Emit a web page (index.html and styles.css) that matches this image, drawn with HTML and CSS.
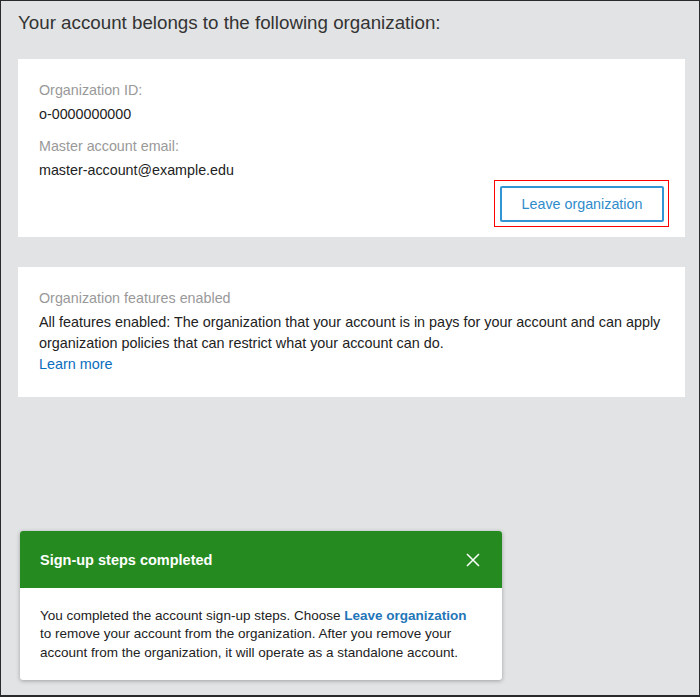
FILE: index.html
```html
<!DOCTYPE html>
<html>
<head>
<meta charset="utf-8">
<link rel="stylesheet" href="styles.css">
</head>
<body>
<div class="frame">
  <h1 class="title">Your account belongs to the following organization:</h1>
  <section class="card card-org">
    <div class="field">
      <div class="label">Organization ID:</div>
      <div class="value">o-0000000000</div>
    </div>
    <div class="field">
      <div class="label">Master account email:</div>
      <div class="value">master-account@example.edu</div>
    </div>
    <div class="actions">
      <span class="highlight"><button class="btn">Leave organization</button></span>
    </div>
  </section>
  <section class="card card-features">
    <div class="label">Organization features enabled</div>
    <p class="desc">All features enabled: The organization that your account is in pays for your account and can apply organization policies that can restrict what your account can do.</p>
    <a class="link" href="#">Learn more</a>
  </section>
  <div class="toast">
    <div class="toast-head">
      <span class="toast-title">Sign-up steps completed</span>
      <svg class="toast-close" width="14" height="14" viewBox="0 0 14 14"><path d="M1 1L13 13M13 1L1 13" stroke="#fff" stroke-width="1.5" fill="none"/></svg>
    </div>
    <div class="toast-body">You completed the account sign-up steps. Choose <b class="toast-link">Leave organization</b> to remove your account from the organization. After you remove your account from the organization, it will operate as a standalone account.</div>
  </div>
</div>
</body>
</html>
```

FILE: styles.css
```css
html, body {
  margin: 0;
  padding: 0;
}
body {
  font-family: "Liberation Sans", Arial, sans-serif;
  color: #333;
  background: #e2e3e5;
}
.frame {
  position: relative;
  box-sizing: border-box;
  width: 700px;
  height: 697px;
  border: 1px solid #2a2a2a;
  border-bottom-width: 2px;
  background: #e2e3e5;
  padding: 0 14px 0 17px;
}
.title {
  margin: 0;
  padding-top: 10px;
  font-size: 18.75px;
  font-weight: normal;
  line-height: 24px;
  color: #333;
  height: 48px;
}
.card {
  background: #fff;
}
.card-org {
  padding: 21px 16px 10px 21px;
  height: 178px;
  box-sizing: border-box;
}
.label {
  font-size: 14.3px;
  line-height: 20px;
  color: #999;
}
.value {
  font-size: 14.3px;
  line-height: 20px;
  color: #222;
  margin-top: 4px;
}
.field + .field {
  margin-top: 12px;
}
.actions {
  display: flex;
  justify-content: flex-end;
}
.highlight {
  display: block;
  border: 1px solid #ff0000;
  padding: 5px 4px 4px 5px;
}
.btn {
  display: block;
  box-sizing: border-box;
  width: 164px;
  height: 36px;
  background: #fff;
  border: 2px solid #3595d4;
  border-radius: 2px;
  color: #2f8ccb;
  font-family: "Liberation Sans", Arial, sans-serif;
  font-size: 14.3px;
  padding: 0;
}
.card-features {
  margin-top: 30px;
  padding: 21px 20px 21px 21px;
  height: 130px;
  box-sizing: border-box;
}
.desc {
  margin: 4px 0 0 0;
  font-size: 14.4px;
  line-height: 21px;
  color: #222;
}
.link {
  display: block;
  font-size: 14.4px;
  line-height: 21px;
  color: #0a6ebd;
  text-decoration: none;
}
.toast {
  position: absolute;
  left: 19px;
  top: 530px;
  width: 482px;
  height: 149px;
  border-radius: 3px;
  overflow: hidden;
  background: #fff;
  box-shadow: 0 1px 4px rgba(0, 0, 0, 0.3);
}
.toast-head {
  height: 57px;
  background: #258a20;
  display: flex;
  align-items: center;
  justify-content: space-between;
  padding: 0 22px 0 20px;
}
.toast-title {
  color: #fff;
  font-weight: bold;
  font-size: 14.5px;
}
.toast-close {
  display: block;
}
.toast-body {
  padding: 19px 30px 18px 20px;
  font-size: 13.5px;
  line-height: 18.3px;
  color: #222;
}
.toast-link {
  color: #1f76b8;
}
```
